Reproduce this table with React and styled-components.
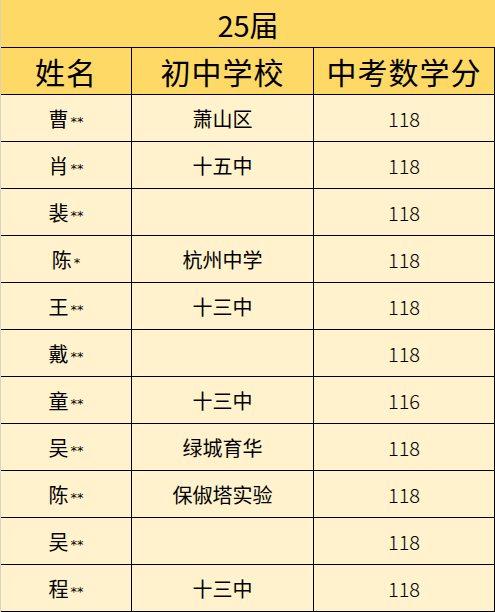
import React from 'react'
import styled, { createGlobalStyle } from 'styled-components'

const rows = [
  { name: '曹', stars: '**', school: '萧山区', score: 118 },
  { name: '肖', stars: '**', school: '十五中', score: 118 },
  { name: '裴', stars: '**', school: '', score: 118 },
  { name: '陈', stars: '*', school: '杭州中学', score: 118 },
  { name: '王', stars: '**', school: '十三中', score: 118 },
  { name: '戴', stars: '**', school: '', score: 118 },
  { name: '童', stars: '**', school: '十三中', score: 116 },
  { name: '吴', stars: '**', school: '绿城育华', score: 118 },
  { name: '陈', stars: '**', school: '保俶塔实验', score: 118 },
  { name: '吴', stars: '**', school: '', score: 118 },
  { name: '程', stars: '**', school: '十三中', score: 118 },
]

const GlobalStyle = createGlobalStyle`
  html, body {
    margin: 0;
    padding: 0;
    background: #fff2cc;
  }
  body {
    font-family: "Noto Sans CJK SC", "DejaVu Sans", sans-serif;
  }
`

const Sheet = styled.div`
  width: 495px;
  height: 612px;
  overflow: hidden;
  background: #fff2cc;
  border-left: 1px solid #d8d2c2;
  box-sizing: border-box;
`

const Title = styled.div`
  height: 47px;
  background: #ffd966;
  display: flex;
  align-items: center;
  justify-content: center;
  font-size: 29px;
  color: #000;
  padding-top: 1px;
  box-sizing: border-box;
`

const Grid = styled.div`
  display: grid;
  grid-template-columns: 130px 182px 182px;
  grid-auto-rows: 47px;
  border-top: 1px solid #000;
`

const Cell = styled.div`
  display: flex;
  align-items: center;
  justify-content: center;
  box-sizing: border-box;
  border-bottom: 1px solid #000;
  border-left: ${p => (p.$first ? 'none' : '1px solid #000')};
  border-right: ${p => (p.$last ? '1px solid #000' : 'none')};
  background: ${p => (p.$head ? '#ffd966' : '#fff2cc')};
  color: #000;
  font-size: ${p => (p.$head ? '30px' : '20px')};
  font-weight: 400;
  letter-spacing: ${p => (p.$head ? '1px' : '0')};
`

const Stars = styled.span`
  font-family: "DejaVu Sans", sans-serif;
  font-size: 13px;
  margin-left: 2px;
  position: relative;
  top: 3px;
`

const Score = styled.span`
  font-family: "Noto Sans CJK SC", sans-serif;
  font-weight: 300;
  font-size: 20px;
  color: #000;
`

export default function App() {
  return (
    <>
      <GlobalStyle />
      <Sheet>
        <Title>25届</Title>
        <Grid>
          <Cell $head $first>姓名</Cell>
          <Cell $head>初中学校</Cell>
          <Cell $head $last>中考数学分</Cell>
          {rows.map((r, i) => (
            <React.Fragment key={i}>
              <Cell $first>
                {r.name}
                <Stars>{r.stars}</Stars>
              </Cell>
              <Cell>{r.school}</Cell>
              <Cell $last>
                <Score>{r.score}</Score>
              </Cell>
            </React.Fragment>
          ))}
        </Grid>
      </Sheet>
    </>
  )
}
